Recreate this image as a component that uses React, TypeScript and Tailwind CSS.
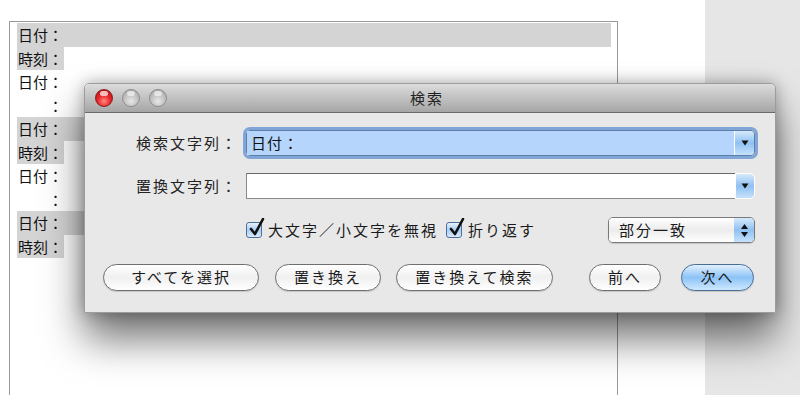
const jp = "font-['Noto_Sans_CJK_JP','Noto_Sans_CJK_SC',sans-serif]";

type Row = { text: string; hl: "full" | "inline" | "none"; indent?: boolean };

const rows: Row[] = [
  { text: "日付：", hl: "full" },
  { text: "時刻：", hl: "inline" },
  { text: "日付：", hl: "none" },
  { text: "：", hl: "none", indent: true },
  { text: "日付：", hl: "full" },
  { text: "時刻：", hl: "inline" },
  { text: "日付：", hl: "none" },
  { text: "：", hl: "none", indent: true },
  { text: "日付：", hl: "full" },
  { text: "時刻：", hl: "inline" },
];

function Light({ red }: { red?: boolean }) {
  return red ? (
    <div className="w-[18px] h-[18px] rounded-full border border-[#8a1c1c] bg-[radial-gradient(circle_at_50%_70%,#ff8a80_0%,#e8262a_45%,#a80f12_100%)] relative">
      <div className="absolute left-[4px] top-[1px] w-[8px] h-[5px] rounded-full bg-white/70" />
    </div>
  ) : (
    <div className="w-[18px] h-[18px] rounded-full border border-[#8e8e8e] bg-[radial-gradient(circle_at_50%_70%,#e6e6e6_0%,#c2c2c2_50%,#9f9f9f_100%)] relative">
      <div className="absolute left-[4px] top-[1px] w-[8px] h-[5px] rounded-full bg-white/60" />
    </div>
  );
}

function ArrowButton({ focused }: { focused?: boolean }) {
  return (
    <div
      className={`w-[20px] h-full flex items-center justify-center rounded-r-[5px] border-l border-white bg-linear-to-b from-[#d6e9fb] via-[#8fc0f2] to-[#c6e2fb] ${focused ? "" : "border border-[#8a8a8a]"}`}
    >
      <svg width="8" height="6" viewBox="0 0 8 6">
        <path d="M0.5 0.5 L7.5 0.5 L4 5.5 Z" fill="#111" />
      </svg>
    </div>
  );
}

function CheckBox() {
  return (
    <div className="relative w-[16px] h-[16px] rounded-[3px] border border-[#4b6f9c] bg-linear-to-b from-[#e6f1fd] via-[#a9cdf4] to-[#dbeafc]">
      <svg className="absolute left-[1px] top-[-5px]" width="17" height="19" viewBox="0 0 17 19">
        <path d="M3 11 L7 16 L15 1" fill="none" stroke="#111" strokeWidth="2.6" strokeLinecap="round" strokeLinejoin="round" />
      </svg>
    </div>
  );
}

function Pill({ label, w, blue, className = "" }: { label: string; w: string; blue?: boolean; className?: string }) {
  return (
    <div
      className={`${w} h-[27px] rounded-full border flex items-center justify-center text-[15px] tracking-[2px] text-[#1a1a1a] shadow-[0_1px_1px_rgba(0,0,0,0.15)] ${
        blue
          ? "border-[#4a6d96] bg-linear-to-b from-[#e2f0fd] via-[#8cc3f6] to-[#cde8fd]"
          : "border-[#6f6f6f] bg-linear-to-b from-[#ffffff] via-[#f0f0f0] to-[#ffffff]"
      } ${className}`}
    >
      {label}
    </div>
  );
}

function Dialog() {
  return (
    <div className={`absolute left-[84px] top-[83px] w-[692px] h-[230px] flex flex-col rounded-t-[5px] border border-[#9c9c9c] shadow-[0_26px_40px_rgba(0,0,0,0.55),0_0_16px_rgba(0,0,0,0.3)] ${jp}`}>
      {/* title bar */}
      <div className="h-[29px] shrink-0 rounded-t-[5px] bg-linear-to-b from-[#dcdcdc] to-[#a6a6a6] border-b border-[#6a6a6a] flex items-center relative">
        <div className="flex items-center gap-[9px] pl-[10px]">
          <Light red />
          <Light />
          <Light />
        </div>
        <div className="absolute inset-0 flex items-center justify-center text-[15px] tracking-[2px] text-[#222] pr-[6px]">検索</div>
      </div>

      {/* body */}
      <div className="flex-1 bg-[#e8e8e8] flex flex-col pt-[17px] pr-[20px]">
        <div className="flex items-center h-[26px]">
          <div className="w-[161px] pr-[8px] text-right text-[15px] tracking-[2px] text-[#222]">検索文字列：</div>
          <div className="flex-1 h-[26px] flex rounded-[4px] ring-[3px] ring-[#7fa6d6] border border-[#5d7ea8]">
            <div className="flex-1 bg-[#b6d5fd] flex items-center pl-[4px] text-[15px] tracking-[1px] text-[#111]">日付：</div>
            <ArrowButton focused />
          </div>
        </div>

        <div className="flex items-center h-[26px] mt-[17px]">
          <div className="w-[161px] pr-[8px] text-right text-[15px] tracking-[2px] text-[#222]">置換文字列：</div>
          <div className="flex-1 h-[26px] flex">
            <div className="flex-1 bg-white border border-[#8a8a8a] border-t-[#6a6a6a] border-r-0" />
            <ArrowButton />
          </div>
        </div>

        <div className="flex items-center h-[26px] mt-[18px] pl-[161px]">
          <CheckBox />
          <span className="ml-[6px] text-[15px] tracking-[2px] text-[#1a1a1a]">大文字／小文字を無視</span>
          <div className="ml-[8px]">
            <CheckBox />
          </div>
          <span className="ml-[6px] text-[15px] tracking-[2px] text-[#1a1a1a]">折り返す</span>
          <div className="ml-auto w-[147px] h-[26px] flex rounded-[5px] border border-[#7a7a7a] overflow-hidden shadow-[0_1px_1px_rgba(0,0,0,0.15)]">
            <div className="flex-1 bg-linear-to-b from-[#ffffff] via-[#ececec] to-[#ffffff] flex items-center pl-[10px] text-[15px] tracking-[2px] text-[#1a1a1a]">部分一致</div>
            <div className="w-[20px] bg-linear-to-b from-[#d6e9fb] via-[#8fc0f2] to-[#c6e2fb] flex flex-col items-center justify-center gap-[3px]">
              <svg width="7" height="5" viewBox="0 0 7 5"><path d="M3.5 0 L7 5 L0 5 Z" fill="#111" /></svg>
              <svg width="7" height="5" viewBox="0 0 7 5"><path d="M0 0 L7 0 L3.5 5 Z" fill="#111" /></svg>
            </div>
          </div>
        </div>

        <div className="flex items-center mt-[21px] pl-[18px]">
          <Pill label="すべてを選択" w="w-[156px]" />
          <Pill label="置き換え" w="w-[106px]" className="ml-[16px]" />
          <Pill label="置き換えて検索" w="w-[157px]" className="ml-[15px]" />
          <Pill label="前へ" w="w-[72px]" className="ml-[36px]" />
          <Pill label="次へ" w="w-[73px]" blue className="ml-[20px]" />
        </div>
      </div>
    </div>
  );
}

export default function App() {
  return (
    <div className="relative w-[800px] h-[395px] bg-white overflow-hidden flex">
      <div className="w-[705px] pt-[21px] pl-[9px]">
        <div className={`w-[609px] h-full border-t border-l border-r border-[#9a9a9a] pt-[1px] pl-[7px] pr-[6px] ${jp}`}>
          {rows.map((r, i) => (
            <div
              key={i}
              className={`h-[23.5px] leading-[23.5px] text-[15px] text-[#111] ${r.hl === "full" ? "bg-[#d4d4d4]" : ""}`}
            >
              {r.hl === "inline" ? (
                <span className="inline-block bg-[#d4d4d4] pl-[1px] pr-[1px]">{r.text}</span>
              ) : (
                <span className={r.indent ? "pl-[31px]" : "pl-[1px]"}>{r.text}</span>
              )}
            </div>
          ))}
        </div>
      </div>
      <div className="flex-1 bg-[#e6e6e6]" />
      <Dialog />
    </div>
  );
}
